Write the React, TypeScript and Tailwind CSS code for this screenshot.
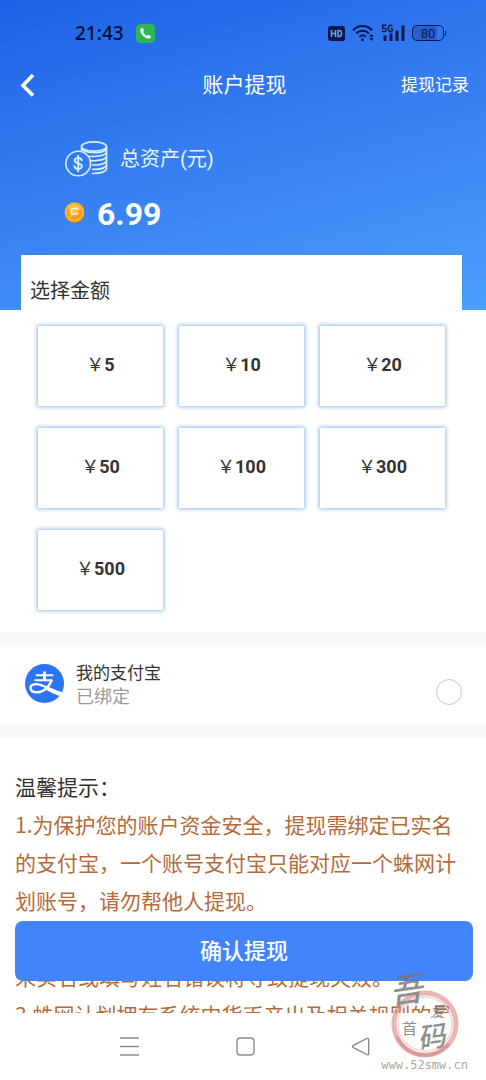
import { useState } from "react";

const amounts = [5, 10, 20, 50, 100, 300, 500];

const tips = [
  "1.为保护您的账户资金安全，提现需绑定已实名的支付宝，一个账号支付宝只能对应一个蛛网计划账号，请勿帮他人提现。",
  "2.请确保支付宝账号已完成实名认证，如因账号未实名或填写姓名错误将导致提现失败。",
  "3.蛛网计划拥有系统内货币产出及相关规则的最终解释权。",
];

function StatusBar() {
  return (
    <div className="flex h-[66px] items-center justify-between pr-10 pl-[75px] text-[#06184a]">
      <div className="flex items-center gap-3">
        <span className="font-['Noto_Sans',sans-serif] text-[19px] font-medium text-[#050d2c]">21:43</span>
        <svg className="size-[19px]" viewBox="0 0 19 19" aria-hidden="true">
          <rect width="19" height="19" rx="4.5" fill="#2fb457" />
          <path
            d="M5.1 4.2c.7-.7 1.5-.5 1.9.2l.9 1.500c.3.6.1 1-.3 1.400-.5.5-.4.8 0 1.400.8 1.200 1.500 1.900 2.700 2.600.6.4.9.4 1.400-.1.4-.4.9-.5 1.400-.2l1.400.9c.8.5.8 1.200.2 1.900-.9 1-2.200 1.300-3.700.7-3-1.200-5.200-3.400-6.400-6.400-.6-1.500-.4-3 .5-3.900z"
            fill="#e4ffe9"
          />
        </svg>
      </div>
      <div className="flex items-center gap-[7px]">
        <svg className="h-[15px] w-[17px]" viewBox="0 0 17 15" aria-hidden="true">
          <rect width="17" height="15" rx="3" fill="currentColor" />
          <path d="M3.500 4v7M7.500 4v7M3.500 7.500h4M10 4.600v5.800h1.200c1.600 0 2.400-1.200 2.400-2.900s-.8-2.900-2.400-2.900z" fill="none" stroke="#6c9df3" strokeWidth="1.500" />
        </svg>
        <svg className="h-[18px] w-[22px]" viewBox="0 0 22 18" fill="none" stroke="currentColor" strokeWidth="2" aria-hidden="true">
          <path d="M1 6.200C6.500.6 14.500.6 20 6.200" />
          <path d="M4.200 9.500c3.700-3.700 9-3.700 12.700 0" />
          <path d="M7.400 12.700c1.900-1.800 4.400-1.800 6.300 0" />
          <circle cx="10.500" cy="15.700" r="1.500" fill="currentColor" stroke="none" />
          <path d="M19.500 9.800l2.300 3h-4.600zM19.500 17l2.300-3h-4.600z" fill="currentColor" stroke="none" />
        </svg>
        <svg className="h-[18px] w-6" viewBox="0 0 24 18" aria-hidden="true">
          <path d="M5.200 1.200H1.600v3.200c2.200-.7 3.500 0 3.500 1.500 0 1.700-2.200 2.300-4 1.200M11.200 2.300C10 .6 7.200.9 7.200 4.400s3 4.200 4 2.400V4.900H9.300" fill="none" stroke="currentColor" strokeWidth="1.400" />
          <path d="M2.500 11.500h3V17h-3zM8.500 9.500h3V17h-3zM14.500 6.500h3V17h-3zM20.500 1.500h3V17h-3z" fill="currentColor" />
        </svg>
        <div className="flex items-center gap-px">
          <div className="flex h-4 w-8 items-center justify-center rounded-[5px] border border-current bg-linear-to-r from-[#2860cf] from-80% to-transparent to-80% font-[Roboto,sans-serif] text-[13px] leading-none">
            80
          </div>
          <div className="h-[5px] w-px bg-current" />
        </div>
      </div>
    </div>
  );
}

function CoinStack() {
  return (
    <svg className="h-9 w-[43px]" viewBox="0 0 43 36" fill="none" stroke="#d5f0ff" strokeWidth="1.600" strokeLinecap="round" aria-hidden="true">
      <ellipse cx="29" cy="5.500" rx="12.500" ry="4.600" />
      <path d="M16.500 5.500v4.200M41.500 5.500v22.300c0 2.600-5.500 4.700-14 4.700" />
      <path d="M16.800 7.500c1.500 5 23 6 24.700 0" />
      <path d="M23 15.200c8 .9 18-.7 18.500-4" />
      <path d="M26 19.600c7 .5 15-1 15.500-4.100" />
      <path d="M27.500 24c7 .2 13.500-1.300 14-4.300" />
      <path d="M27.500 28.300c7 .2 13.500-1.300 14-4.300" />
      <circle cx="13.200" cy="22.500" r="12.300" />
      <path d="M16.700 19.300c-.5-3.200-7-3.200-7 .2 0 3.800 7.200 2 7.200 5.800 0 3.600-7.200 3.500-7.500-.2M13.200 14.800v15.400" strokeWidth="1.900" />
    </svg>
  );
}

function GoldCoin() {
  return (
    <svg className="mb-1 size-[21px]" viewBox="0 0 20 20" aria-hidden="true">
      <circle cx="10" cy="10.500" r="9.500" fill="#f07f16" />
      <circle cx="10" cy="9.500" r="9.300" fill="#ffb42c" />
      <circle cx="10" cy="9.500" r="7.200" fill="#fb9c1f" />
      <path d="M4 5.500A7.200 7.200 0 0 1 16.500 6.500L6 14.500z" fill="#ffc04a" />
      <path d="M13 7.300c-1-2-6.300-2-6.300 1.500s5.300 3.600 6.500 1.400" fill="none" stroke="#fff0c2" strokeWidth="1.700" />
    </svg>
  );
}

function AlipayLogo() {
  return (
    <svg className="mb-1 size-[39px]" viewBox="0 0 39 39" aria-hidden="true">
      <circle cx="19.500" cy="19.500" r="19.500" fill="#2b75f5" />
      <g fill="none" stroke="#fff">
        <path d="M10.800 11.200h17.400M9.500 16.200h18" strokeWidth="2" />
        <path d="M19.500 7.500v8.500" strokeWidth="3" />
        <path d="M26.800 16c-2.300 6.200-7.500 12.300-14.300 12.300-4.300 0-7-1.800-7-4.300 0-2.300 2.300-3.900 5.800-3.900 6.500 0 12.500 5.300 25.500 9.400" strokeWidth="2.400" />
      </g>
      <path d="M22 23.500c5 2.300 10 4.300 15.900 5.700l-1.900 3.300c-5.500-1.700-10.500-4.200-15.500-7z" fill="#fff" />
    </svg>
  );
}

function Watermark() {
  return (
    <div className="pointer-events-none absolute right-[18px] bottom-[9px] flex flex-col items-center opacity-80" aria-hidden="true">
      <svg className="h-[92px] w-[76px]" viewBox="0 -4 76 92" fontFamily="'Noto Sans CJK SC', sans-serif">
        <g fill="none">
          <circle cx="38" cy="53" r="31" stroke="#dc8580" strokeWidth="5" opacity=".75" />
          <path d="M10 66A31 31 0 0 0 62 73" stroke="#c9706b" strokeWidth="3" opacity=".7" />
          <circle cx="38" cy="53" r="27" stroke="#eccfca" strokeWidth="1.500" />
        </g>
        <g fill="#747474">
          <text x="3" y="31" fontSize="33" fontStyle="italic" fontWeight="500" transform="rotate(-8 20 24)">吾</text>
          <text x="15" y="63" fontSize="15">首</text>
          <text x="43" y="46" fontSize="15" fontStyle="italic">爱</text>
          <text x="30" y="76" fontSize="28" fontStyle="italic" fontWeight="500" transform="rotate(-8 45 65)">码</text>
        </g>
      </svg>
      <span className="font-[DejaVu_Sans_Mono,monospace] text-[12px] leading-3 text-[#97918a]">www.52smw.cn</span>
    </div>
  );
}

export default function App() {
  const [bound, setBound] = useState(false);

  return (
    <div className="relative flex h-screen flex-col overflow-hidden bg-white font-['Roboto','Noto_Sans_CJK_SC',sans-serif] text-[#333]">
      <div className="relative min-h-0 flex-1">
        <main className="h-full overflow-y-auto [scrollbar-width:none]">
          <header className="bg-[linear-gradient(165deg,#1d62e7_0%,#3a83f3_55%,#4b9efc_100%)] pb-[76px] text-white">
            <StatusBar />
            <div className="grid h-[38px] grid-cols-[1fr_auto_1fr] items-center pr-[17px] pl-5">
              <button type="button" aria-label="返回" className="w-4">
                <svg className="h-6 w-4" viewBox="0 0 16 24" fill="none" stroke="currentColor" strokeWidth="3.600" aria-hidden="true">
                  <path d="M13 2L3 12.500 13 22.500" />
                </svg>
              </button>
              <h1 className="text-[21px] leading-8">账户提现</h1>
              <a href="#records" className="justify-self-end text-[17px] leading-8">提现记录</a>
            </div>
            <div className="mt-[35px] flex h-10 items-center gap-3 pl-[65px] text-[#e6f7ff]">
              <CoinStack />
              <span className="text-[20px]">总资产(元)</span>
            </div>
            <div className="mt-[15px] flex h-10 items-center gap-3 pl-16">
              <GoldCoin />
              <strong className="text-[32px] leading-10 font-bold">6.99</strong>
            </div>
          </header>

          <section className="relative -mt-[55px] mr-6 ml-[21px] bg-white pt-5 pb-[22px]">
            <h2 className="px-[9px] text-[20px] leading-8">选择金额</h2>
            <div className="mt-[19px] grid grid-cols-3 gap-x-4 gap-y-[22px] px-[17px]">
              {amounts.map((amount) => (
                <button
                  key={amount}
                  type="button"
                  className="h-20 bg-white pb-1 text-[18px] shadow-[0_0_4px_1px_#8fbcea]"
                >
                  ￥<b className="font-bold">{amount}</b>
                </button>
              ))}
            </div>
          </section>

          <div className="h-[15px] bg-[#f8f8f8]" />
          <label className="flex h-[76px] items-center pr-6 pl-[25px]">
            <AlipayLogo />
            <span className="ml-3 flex flex-1 flex-col">
              <span className="text-[17px] leading-6">我的支付宝</span>
              <span className="text-[18px] leading-6 text-[#999]">已绑定</span>
            </span>
            <input
              type="radio"
              name="account"
              checked={bound}
              onChange={() => setBound(true)}
              className="mt-3.5 size-[26px] appearance-none rounded-full border border-[#c8c8c8] bg-white checked:border-[7px] checked:border-[#4285fb]"
            />
          </label>
          <div className="h-[15px] bg-[#f8f8f8]" />

          <section className="px-[15px] pt-[29px] pb-28 font-['Noto_Sans_CJK_SC',sans-serif] text-[21px] leading-[38px]">
            <h2>温馨提示：</h2>
            {tips.map((tip) => (
              <p key={tip} className="text-[#b56a3a]">{tip}</p>
            ))}
          </section>
        </main>

        <button
          type="button"
          className="absolute right-[13px] bottom-8 left-[15px] h-[60px] rounded-lg bg-[#4285fb] text-[22px] font-medium text-white"
        >
          确认提现
        </button>
      </div>

      <nav className="flex h-[67px] items-center justify-between bg-white pr-[116px] pl-[120px] text-[#8c8c8c]">
        {[
          { label: "菜单", d: "M0 1h19M0 9.500h19M0 18h19" },
          { label: "主页", d: "M4.500 1h10Q18 1 18 4.500v10Q18 18 14.500 18h-10Q1 18 1 14.500v-10Q1 1 4.500 1z" },
          { label: "后退", d: "M16 1.300L2 8.700q-1.200.8 0 1.600l14 7.400q1.700.6 1.700-1V2.300q0-1.600-1.700-1z" },
        ].map((item) => (
          <button key={item.label} type="button" aria-label={item.label}>
            <svg className="size-[19px]" viewBox="0 0 19 19" fill="none" stroke="currentColor" strokeWidth="1.400" aria-hidden="true">
              <path d={item.d} />
            </svg>
          </button>
        ))}
      </nav>
      <Watermark />
    </div>
  );
}
